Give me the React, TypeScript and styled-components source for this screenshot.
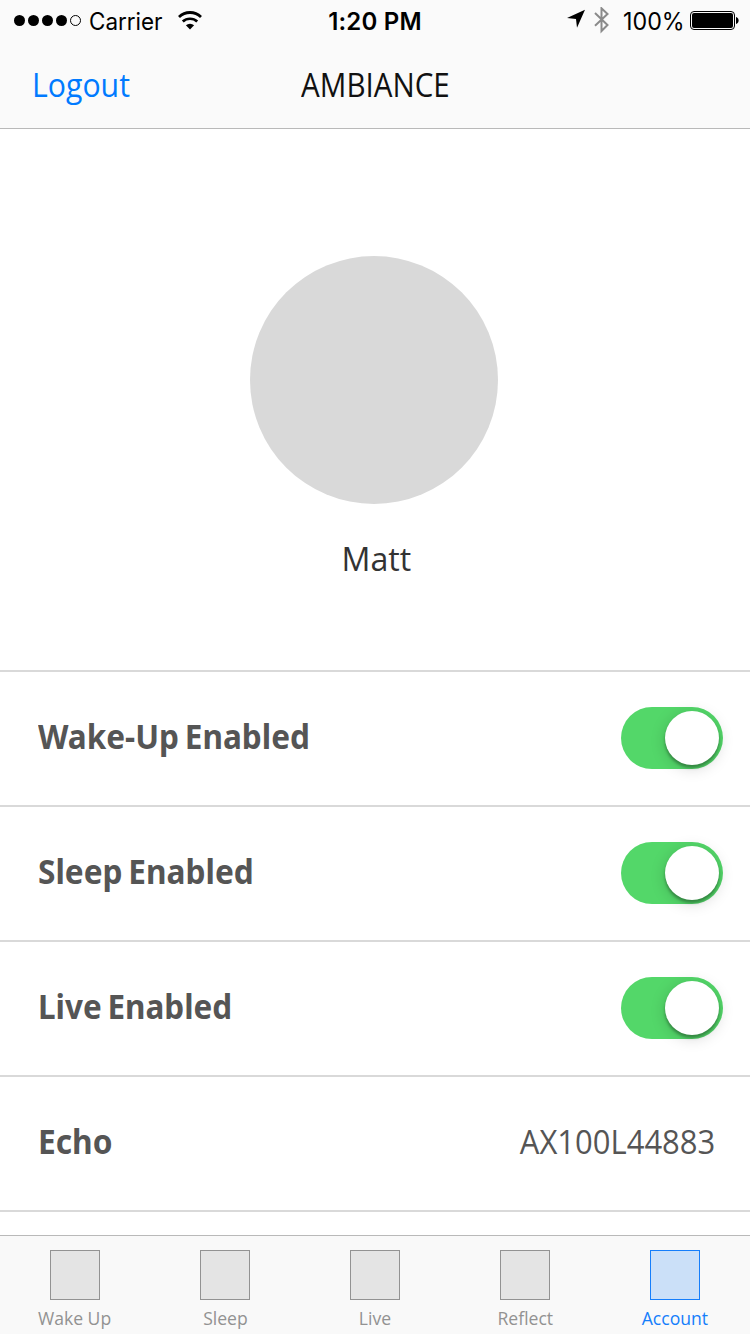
import React, { useState } from 'react';
import styled, { createGlobalStyle } from 'styled-components';

const humanist = `'Open Sans', 'Noto Sans', sans-serif`;
const blue = '#007aff';

const GlobalStyle = createGlobalStyle`
  * { box-sizing: border-box; }
  body { margin: 0; background: #fff; }
`;

const Screen = styled.div`
  display: flex;
  flex-direction: column;
  width: 750px;
  height: 1334px;
  overflow: hidden;
  background: #fff;
  font-family: ${humanist};
`;

const Header = styled.header`
  flex: none;
  height: 129px;
  background: #fafafa;
  border-bottom: 1px solid #b9b9b9;
`;

const StatusBar = styled.div`
  display: grid;
  grid-template-columns: 1fr auto 1fr;
  align-items: center;
  height: 41px;
  padding: 0 11px 0 14px;
  color: #000;
  font-family: Inter, sans-serif;
  font-size: 24px;
  line-height: 41px;
`;

const StatusGroup = styled.div<{ $end?: boolean }>`
  display: flex;
  align-items: center;
  justify-content: ${(p) => (p.$end ? 'flex-end' : 'flex-start')};
`;

const Carrier = styled.span`
  width: 73px;
  margin-left: 7px;
  white-space: nowrap;
  transform: scaleX(0.935);
  transform-origin: left;
`;

const WifiIcon = styled.svg`
  margin-left: 15px;
`;

const Clock = styled.span`
  padding: 1px 3px 0 0;
  font-weight: 600;
  letter-spacing: 0.2px;
`;

const Battery = styled.svg`
  margin-left: 5px;
`;

const Percent = styled.span`
  width: 62px;
  margin-left: 13px;
  white-space: nowrap;
  transform: scaleX(0.97);
  transform-origin: left;
`;

const NavBar = styled.nav`
  display: grid;
  grid-template-columns: 1fr auto 1fr;
  align-items: center;
  height: 87px;
  padding: 0 31px 0 32px;
  font-size: 32px;
  line-height: 44px;
`;

const LogoutButton = styled.button`
  justify-self: start;
  padding: 0;
  border: 0;
  background: none;
  color: ${blue};
  font: inherit;
  transform: scaleX(0.945);
  transform-origin: left;
`;

const Title = styled.h1`
  margin: 0;
  color: #111;
  font: inherit;
  transform: scaleX(0.924);
`;

const Profile = styled.section`
  display: flex;
  flex: none;
  flex-direction: column;
  align-items: center;
  height: 541px;
  padding: 127px 2px 0 0;
`;

const Avatar = styled.div`
  width: 248px;
  height: 248px;
  border-radius: 50%;
  background: #d9d9d9;
`;

const UserName = styled.div`
  margin: 31px 0 0 4px;
  color: #333;
  font-size: 33.5px;
  line-height: 46px;
  transform: scaleX(0.96);
`;

const Settings = styled.main`
  flex: 1;
  min-height: 0;
  border-bottom: 1px solid #b9b9b9;
`;

const SettingRow = styled.div`
  display: flex;
  align-items: center;
  justify-content: space-between;
  height: 135px;
  padding: 0 27px 2px 38px;
  border-top: 2px solid #d9d9d9;
`;

const SettingsEnd = styled.div`
  height: 2px;
  background: #d9d9d9;
`;

const SettingLabel = styled.span<{ $stretch: number }>`
  padding-bottom: 4px;
  color: #555;
  font-family: 'Noto Sans', sans-serif;
  font-size: 33.5px;
  font-weight: 700;
  line-height: 46px;
  word-spacing: -2.5px;
  transform: scaleX(${(p) => p.$stretch});
  transform-origin: left;
`;

const SettingValue = styled.span`
  margin-right: 8px;
  padding-bottom: 4px;
  color: #555;
  font-size: 33.5px;
  line-height: 46px;
  transform: scaleX(0.925);
  transform-origin: right;
`;

const Track = styled.button<{ $on: boolean }>`
  display: flex;
  align-items: center;
  justify-content: ${(p) => (p.$on ? 'flex-end' : 'flex-start')};
  width: 102px;
  height: 62px;
  padding: 0 4px;
  border: 0;
  border-radius: 31px;
  background: ${(p) => (p.$on ? '#53d769' : '#e5e5e5')};
`;

const Knob = styled.span`
  width: 54px;
  height: 54px;
  border-radius: 50%;
  background: #fff;
  box-shadow: 0 3px 3px rgba(0, 0, 0, 0.3), 0 3px 15px rgba(0, 0, 0, 0.17);
`;

const TabBar = styled.nav`
  display: grid;
  flex: none;
  grid-template-columns: repeat(5, 1fr);
  height: 98px;
  background: #f9f9f9;
`;

const Tab = styled.button<{ $active: boolean }>`
  display: flex;
  flex-direction: column;
  align-items: center;
  padding: 14px 0 0;
  border: 0;
  background: none;
  color: ${(p) => (p.$active ? '#157efb' : '#929292')};
  font-family: ${humanist};
`;

const TabIcon = styled.span<{ $active: boolean }>`
  width: 50px;
  height: 50px;
  border: 1px solid ${(p) => (p.$active ? '#157efb' : '#929292')};
  background: ${(p) => (p.$active ? '#cbe0f8' : '#e4e4e4')};
`;

const TabLabel = styled.span`
  margin-top: 5px;
  font-size: 18.5px;
  line-height: 26px;
  transform: scaleX(0.95);
`;

function Toggle({ label }: { label: string }) {
  const [on, setOn] = useState(true);
  return (
    <Track type="button" role="switch" aria-checked={on} aria-label={label} $on={on} onClick={() => setOn(!on)}>
      <Knob />
    </Track>
  );
}

const toggles = [
  { label: 'Wake-Up Enabled', stretch: 0.941 },
  { label: 'Sleep Enabled', stretch: 0.943 },
  { label: 'Live Enabled', stretch: 0.938 },
];

const tabs = ['Wake Up', 'Sleep', 'Live', 'Reflect', 'Account'];

export default function App() {
  const [active, setActive] = useState('Account');
  return (
    <Screen>
      <GlobalStyle />
      <Header>
        <StatusBar>
          <StatusGroup>
            <svg width="68" height="12" viewBox="0 0 68 12">
              {[5.5, 19.5, 33.5, 47.5].map((x) => (
                <circle key={x} cx={x} cy="5.5" r="5.5" />
              ))}
              <circle cx="61.5" cy="5.5" r="5" fill="none" stroke="#000" />
            </svg>
            <Carrier>Carrier</Carrier>
            <WifiIcon width="26" height="20" viewBox="0 0 26 20" fill="none" stroke="#000">
              <path d="M2 5.9a16 16 0 0 1 22 0" strokeWidth="2.8" />
              <path d="M5.8 10.6a10.5 10.5 0 0 1 14.4 0" strokeWidth="2.7" />
              <path d="M13 18.6l-4.1-4.3a6.2 6.2 0 0 1 8.2 0z" fill="#000" stroke="none" />
            </WifiIcon>
          </StatusGroup>
          <Clock>1:20 PM</Clock>
          <StatusGroup $end>
            <svg width="44" height="28" viewBox="0 0 44 28">
              <path d="M19 2.8L11 20.8L10 12.1L1 11.1z" />
              <path d="M29 6l12.5 12-6 6V1.3L41.5 6.9 29 18.7" fill="none" stroke="#8a8a8a" strokeWidth="2" />
            </svg>
            <Percent>100%</Percent>
            <Battery width="49" height="20" viewBox="0 0 49 20">
              <rect x="0.5" y="0.5" width="44" height="18" rx="3.5" fill="none" stroke="#000" />
              <rect x="2" y="2" width="41" height="15" rx="2" />
              <path d="M46 6c1.6.3 2.6 1.7 2.6 3.5s-1 3.2-2.6 3.5z" />
            </Battery>
          </StatusGroup>
        </StatusBar>
        <NavBar>
          <LogoutButton type="button">Logout</LogoutButton>
          <Title>AMBIANCE</Title>
        </NavBar>
      </Header>
      <Profile>
        <Avatar />
        <UserName>Matt</UserName>
      </Profile>
      <Settings>
        {toggles.map((t) => (
          <SettingRow key={t.label}>
            <SettingLabel $stretch={t.stretch}>{t.label}</SettingLabel>
            <Toggle label={t.label} />
          </SettingRow>
        ))}
        <SettingRow>
          <SettingLabel $stretch={0.945}>Echo</SettingLabel>
          <SettingValue>AX100L44883</SettingValue>
        </SettingRow>
        <SettingsEnd />
      </Settings>
      <TabBar>
        {tabs.map((t) => (
          <Tab key={t} type="button" $active={t === active} onClick={() => setActive(t)}>
            <TabIcon $active={t === active} />
            <TabLabel>{t}</TabLabel>
          </Tab>
        ))}
      </TabBar>
    </Screen>
  );
}
